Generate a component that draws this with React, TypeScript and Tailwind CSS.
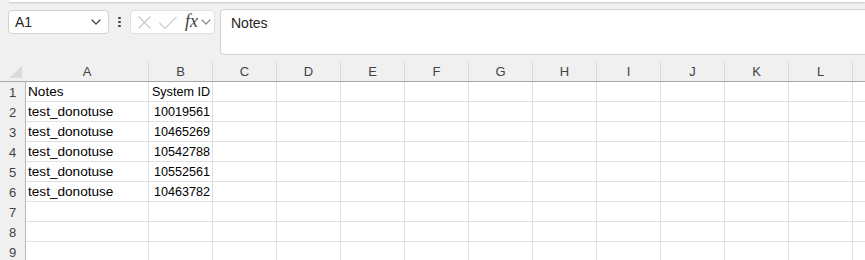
const cols = ["A", "B", "C", "D", "E", "F", "G", "H", "I", "J", "K", "L", "M"]
const widths: Record<string, string> = { A: "w-[123px]" }

const rows: [string, string][] = [
  ["Notes", "System ID"],
  ["test_donotuse", "10019561"],
  ["test_donotuse", "10465269"],
  ["test_donotuse", "10542788"],
  ["test_donotuse", "10552561"],
  ["test_donotuse", "10463782"],
  ["", ""],
  ["", ""],
  ["", ""],
]

const font = { fontFamily: "'Liberation Sans', Arial, sans-serif" }

function Chevron({ w, color }: { w: number; color: string }) {
  return (
    <svg width={w} height={w / 2 + 1} viewBox="0 0 10 6" fill="none">
      <path d="M1 1l4 4 4-4" stroke={color} strokeWidth="1.2" strokeLinecap="round" strokeLinejoin="round" />
    </svg>
  )
}

export default function App() {
  return (
    <div className="w-[865px] h-[260px] overflow-hidden bg-[#f0f0f0] text-[#242424]" style={font}>
      {/* ribbon edge */}
      <div className="ml-[9px] h-[2px] bg-white rounded-bl-[4px] shadow-[0_1px_2px_rgba(0,0,0,0.18)]" />

      {/* formula bar row */}
      <div className="flex items-start pl-[8px] pt-[7px] h-[53px]">
        <div className="flex items-center justify-between w-[101px] h-[24px] mt-[1px] bg-white border border-[#d1d1d1] rounded-[4px] pl-[6px] pr-[7px]">
          <span className="text-[14px]">A1</span>
          <Chevron w={10} color="#424242" />
        </div>
        <div className="flex flex-col items-center justify-center gap-[1.5px] w-[21px] h-[24px] mt-[1px]">
          <span className="w-[2.5px] h-[2.5px] rounded-full bg-[#424242]" />
          <span className="w-[2.5px] h-[2.5px] rounded-full bg-[#424242]" />
          <span className="w-[2.5px] h-[2.5px] rounded-full bg-[#424242]" />
        </div>
        <div className="flex items-center w-[85px] h-[24px] mt-[1px] bg-white border border-[#e0e0e0] rounded-[4px] pl-[7px]">
          <svg width="13" height="13" viewBox="0 0 13 13" fill="none">
            <path d="M0.5 0.5l12 12M12.5 0.5l-12 12" stroke="#c8c8c8" strokeWidth="1.1" />
          </svg>
          <svg width="18" height="13" viewBox="0 0 18 13" fill="none" className="ml-[8px]">
            <path d="M0.5 7l5.5 5.5L17.5 0.8" stroke="#c8c8c8" strokeWidth="1.1" />
          </svg>
          <span
            className="ml-[8px] text-[18px] italic text-[#424242] leading-none -mt-[2px]"
            style={{ fontFamily: "'Liberation Serif', 'Times New Roman', serif" }}
          >
            fx
          </span>
          <span className="ml-[3px]">
            <Chevron w={10} color="#8a8a8a" />
          </span>
        </div>
        <div className="ml-[5px] flex-1 h-[46px] -mr-[10px] bg-white border border-[#d1d1d1] rounded-[4px] pl-[10px] pt-[3px] text-[14px]">
          Notes
        </div>
      </div>

      {/* grid */}
      <div className="bg-white">
        {/* column headers */}
        <div className="flex h-[27px] bg-[#f0f0f0] border-b border-[#a8a8a8]">
          <div className="w-[26px] shrink-0 flex items-end justify-end pr-[3px] pb-[3px] border-r border-[#f0f0f0]">
            <svg width="13" height="12" viewBox="0 0 13 12">
              <polygon points="13,0 13,12 0,12" fill="#dadada" />
            </svg>
          </div>
          {cols.map((c) => (
            <div key={c} className={`${widths[c] ?? "w-[64px]"} shrink-0 flex flex-col`}>
              <div className="h-[7px]" />
              <div className="flex-1 flex items-center justify-center border-r border-[#dadada] text-[13px] text-[#424242]">
                {c === "M" ? "" : c}
              </div>
            </div>
          ))}
        </div>

        {rows.map((r, i) => (
          <div key={i} className="flex h-[20px]">
            <div className="w-[26px] shrink-0 bg-[#f0f0f0] border-r border-[#b8b8b8] flex items-center justify-center pt-[2px] text-[13px] text-[#424242]">
              {i + 1}
            </div>
            {cols.map((c, j) => (
              <div
                key={c}
                className={`${widths[c] ?? "w-[64px]"} shrink-0 border-r border-b border-[#e1e1e1] flex items-center pt-[2px] text-black whitespace-nowrap overflow-hidden ${
                  j === 1 ? "justify-end pr-[2px] text-[12.6px]" : "pl-[2px] text-[13.6px]"
                }`}
              >
                {j === 0 ? r[0] : j === 1 ? r[1] : ""}
              </div>
            ))}
          </div>
        ))}
      </div>
    </div>
  )
}
